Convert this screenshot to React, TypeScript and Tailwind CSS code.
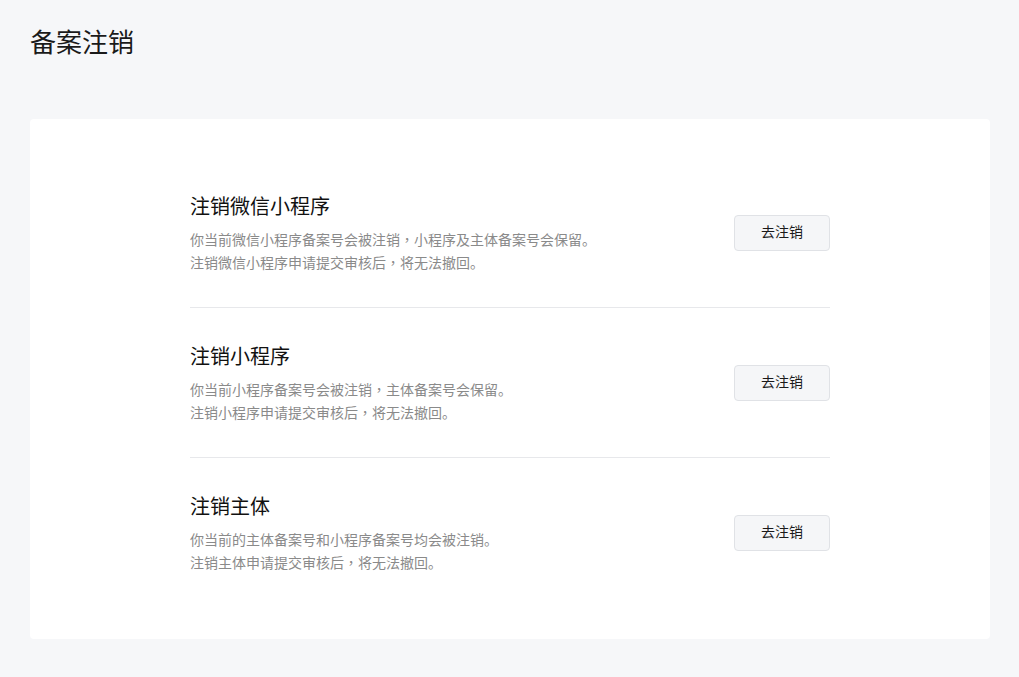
import React from "react";

const items = [
  {
    title: "注销微信小程序",
    lines: [
      ["你当前微信小程序备案号会被注销", "小程序及主体备案号会保留。"],
      ["注销微信小程序申请提交审核后", "将无法撤回。"],
    ],
  },
  {
    title: "注销小程序",
    lines: [
      ["你当前小程序备案号会被注销", "主体备案号会保留。"],
      ["注销小程序申请提交审核后", "将无法撤回。"],
    ],
  },
  {
    title: "注销主体",
    lines: [
      ["你当前的主体备案号和小程序备案号均会被注销。"],
      ["注销主体申请提交审核后", "将无法撤回。"],
    ],
  },
];

function Line({ parts }: { parts: string[] }) {
  return (
    <div>
      {parts.map((p, k) => (
        <React.Fragment key={k}>
          {k > 0 && (
            <span
              className="leading-[0]"
              style={{ fontFamily: '"Noto Sans CJK TC", sans-serif' }}
            >
              ，
            </span>
          )}
          {p}
        </React.Fragment>
      ))}
    </div>
  );
}

export default function App() {
  return (
    <div
      className="min-h-[677px] w-full bg-[#f6f7f9] pl-[30px] pr-[29px] pt-[25px] pb-[38px]"
      style={{ fontFamily: '"Liberation Sans", "Noto Sans CJK SC", sans-serif' }}
    >
      <h1 className="text-[26px] leading-[36px] text-[#1a1a1a] font-normal">备案注销</h1>
      <div className="mt-[58px] rounded-[4px] bg-white pt-[39px] pb-[32px]">
        <div className="mx-auto w-[640px]">
          {items.map((it, i) => (
            <div
              key={i}
              className={
                "flex items-center justify-between pt-[35px] pb-[32px] " +
                (i < items.length - 1 ? "border-b border-[#e7e8eb]" : "")
              }
            >
              <div>
                <div className="text-[20px] leading-[28px] text-[#111]">{it.title}</div>
                <div className="mt-[8px] text-[14px] leading-[23px] text-[#8a8a8a]">
                  {it.lines.map((l, j) => (
                    <Line key={j} parts={l} />
                  ))}
                </div>
              </div>
              <button className="h-[36px] w-[96px] rounded-[4px] border border-[#e0e2e6] bg-[#f5f6f8] text-[14px] text-[#1a1a1a] mt-[-3px]">
                去注销
              </button>
            </div>
          ))}
        </div>
      </div>
    </div>
  );
}
